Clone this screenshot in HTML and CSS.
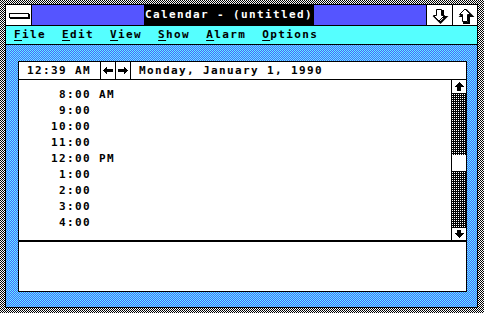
FILE: index.html
```html
<!DOCTYPE html>
<html lang="en">
<head>
  <meta charset="UTF-8" />
  <title>Calendar - (untitled)</title>
  <link rel="stylesheet" href="styles.css">
</head>
<body>

<div class="window">
  <div class="frame">

    <!-- TITLE BAR -->
    <div class="titlebar">
      <div class="sysmenu"><span class="sysbar"></span></div>
      <div class="caption"><span class="caption-text">Calendar - (untitled)</span></div>
      <div class="tbtn">
        <svg width="25" height="20" viewBox="0 0 25 20">
          <path d="M10.5 5.5 H15.5 V11.5 H18.5 L13 17 L7.5 11.5 H10.5 Z" fill="none" stroke="#000" stroke-width="2" transform="translate(0.5 0.5)"/>
          <path d="M9.5 4.5 H14.5 V10.5 H17.5 L12 16 L6.5 10.5 H9.5 Z" fill="#fff" stroke="#000" stroke-width="1"/>
        </svg>
      </div>
      <div class="tbtn tbtn-last">
        <svg width="24" height="20" viewBox="0 0 24 20">
          <path d="M10.5 17.5 H15.5 V10.5 H18.5 L13 5 L7.5 10.5 H10.5 Z" fill="none" stroke="#000" stroke-width="2" transform="translate(0.5 0.5)"/>
          <path d="M9.5 16.5 H14.5 V9.5 H17.5 L12 4 L6.5 9.5 H9.5 Z" fill="#fff" stroke="#000" stroke-width="1"/>
        </svg>
      </div>
    </div>

    <!-- MENU BAR -->
    <div class="menubar">
      <span><u>F</u>ile</span>
      <span><u>E</u>dit</span>
      <span><u>V</u>iew</span>
      <span><u>S</u>how</span>
      <span><u>A</u>larm</span>
      <span><u>O</u>ptions</span>
    </div>

    <!-- CLIENT AREA -->
    <div class="client">
      <div class="panel">
        <div class="header">
          <div class="cell cell-time">12:39 AM</div>
          <div class="cell cell-arrow">
            <svg width="14" height="17" viewBox="0 0 14 17" shape-rendering="crispEdges">
              <polygon points="2,8.5 6,4.5 6,7 12,7 12,10 6,10 6,12.5" fill="#000"/>
            </svg>
          </div>
          <div class="cell cell-arrow">
            <svg width="14" height="17" viewBox="0 0 14 17" shape-rendering="crispEdges">
              <polygon points="12,8.5 8,4.5 8,7 2,7 2,10 8,10 8,12.5" fill="#000"/>
            </svg>
          </div>
          <div class="cell cell-date">Monday, January 1, 1990</div>
        </div>

        <div class="day">
          <div class="slots">
            <div class="slot"> 8:00 AM</div>
            <div class="slot"> 9:00</div>
            <div class="slot">10:00</div>
            <div class="slot">11:00</div>
            <div class="slot">12:00 PM</div>
            <div class="slot"> 1:00</div>
            <div class="slot"> 2:00</div>
            <div class="slot"> 3:00</div>
            <div class="slot"> 4:00</div>
          </div>
          <div class="vscroll">
            <div class="sbtn sbtn-up">
              <svg width="14" height="13" viewBox="0 0 14 13" shape-rendering="crispEdges">
                <polygon points="7,2 12,7 9,7 9,11 5,11 5,7 2,7" fill="#000"/>
              </svg>
            </div>
            <div class="track"><div class="thumb"></div></div>
            <div class="sbtn sbtn-down">
              <svg width="14" height="12" viewBox="0 0 14 12" shape-rendering="crispEdges">
                <polygon points="7,10 12,5 9,5 9,2 5,2 5,5 2,5" fill="#000"/>
              </svg>
            </div>
          </div>
        </div>

        <div class="notes"></div>
      </div>
    </div>

  </div>
</div>

</body>
</html>
```

FILE: styles.css
```css
body {
  margin: 0;
  font-family: "DejaVu Sans Mono", monospace;
  font-weight: bold;
  font-size: 11px;
  letter-spacing: 1.378px;
  color: #000;
}

/* 1px dither patterns */
.window {
  width: 484px;
  height: 313px;
  box-sizing: border-box;
  padding: 4px 6px 5px 5px;
  background-color: #fff;
  background-image: url("data:image/svg+xml,%3Csvg xmlns='http://www.w3.org/2000/svg' width='2' height='2' shape-rendering='crispEdges'%3E%3Crect width='1' height='1' fill='%23000'/%3E%3Crect x='1' y='1' width='1' height='1' fill='%23000'/%3E%3C/svg%3E");
  background-size: 2px 2px;
}

.frame {
  height: 100%;
  box-sizing: border-box;
  border: 1px solid #000;
  display: flex;
  flex-direction: column;
}

/* title bar */
.titlebar {
  height: 20px;
  flex: none;
  display: flex;
  border-bottom: 1px solid #000;
}

.sysmenu {
  width: 25px;
  background: #fff;
  border-right: 1px solid #000;
  display: flex;
  align-items: center;
  justify-content: center;
}

.sysbar {
  width: 18px;
  height: 3px;
  border: 1px solid #000;
  background: #fff;
  box-shadow: 1px 1px 0 #000;
}

.caption {
  flex: 1;
  background: #5555ff;
  display: flex;
  justify-content: center;
  border-right: 1px solid #000;
}

.caption-text {
  background: #000;
  color: #fff;
  padding: 0 1px 0 1px;
  line-height: 20px;
}

.tbtn {
  width: 25px;
  background: #fff;
  border-right: 1px solid #000;
}

.tbtn-last {
  width: 24px;
  border-right: none;
}

.tbtn svg {
  display: block;
}

/* menu */
.menubar {
  height: 18px;
  flex: none;
  background: #55ffff;
  border-bottom: 1px solid #000;
  display: flex;
  gap: 16px;
  padding-left: 8px;
  line-height: 18px;
}

.menubar u {
  text-decoration-thickness: 1px;
  text-underline-offset: 2px;
}

/* client */
.client {
  flex: 1;
  min-height: 0;
  padding: 16px 10px 15px 12px;
  background-color: #55ffff;
  background-image: url("data:image/svg+xml,%3Csvg xmlns='http://www.w3.org/2000/svg' width='2' height='2' shape-rendering='crispEdges'%3E%3Crect width='1' height='1' fill='%235555ff'/%3E%3Crect x='1' y='1' width='1' height='1' fill='%235555ff'/%3E%3C/svg%3E");
  background-size: 2px 2px;
  display: flex;
}

.panel {
  flex: 1;
  background: #fff;
  border: 1px solid #000;
  display: flex;
  flex-direction: column;
}

.header {
  height: 17px;
  flex: none;
  display: flex;
  border-bottom: 1px solid #000;
  line-height: 17px;
}

.cell {
  border-right: 1px solid #000;
}

.cell-time {
  width: 73px;
  padding-left: 8px;
}

.cell-arrow {
  width: 14px;
}

.cell-arrow svg {
  display: block;
}

.cell-date {
  border-right: none;
  padding-left: 8px;
}

.day {
  height: 160px;
  flex: none;
  display: flex;
}

.slots {
  flex: 1;
  padding: 7px 0 0 32px;
}

.slot {
  height: 16px;
  line-height: 16px;
  white-space: pre;
}

.vscroll {
  width: 14px;
  border-left: 1px solid #000;
  display: flex;
  flex-direction: column;
}

.sbtn {
  flex: none;
  background: #fff;
}

.sbtn svg {
  display: block;
}

.sbtn-up {
  height: 13px;
  border-bottom: 1px solid #000;
}

.sbtn-down {
  height: 12px;
  border-top: 1px solid #000;
}

.track {
  flex: 1;
  background-color: #000;
  background-image: url("data:image/svg+xml,%3Csvg xmlns='http://www.w3.org/2000/svg' width='2' height='2' shape-rendering='crispEdges'%3E%3Crect width='1' height='1' fill='%23fff'/%3E%3C/svg%3E");
  background-size: 2px 2px;
}

.thumb {
  height: 16px;
  margin-top: 61px;
  background: #fff;
}

.notes {
  flex: 1;
  border-top: 2px solid #000;
}
```
